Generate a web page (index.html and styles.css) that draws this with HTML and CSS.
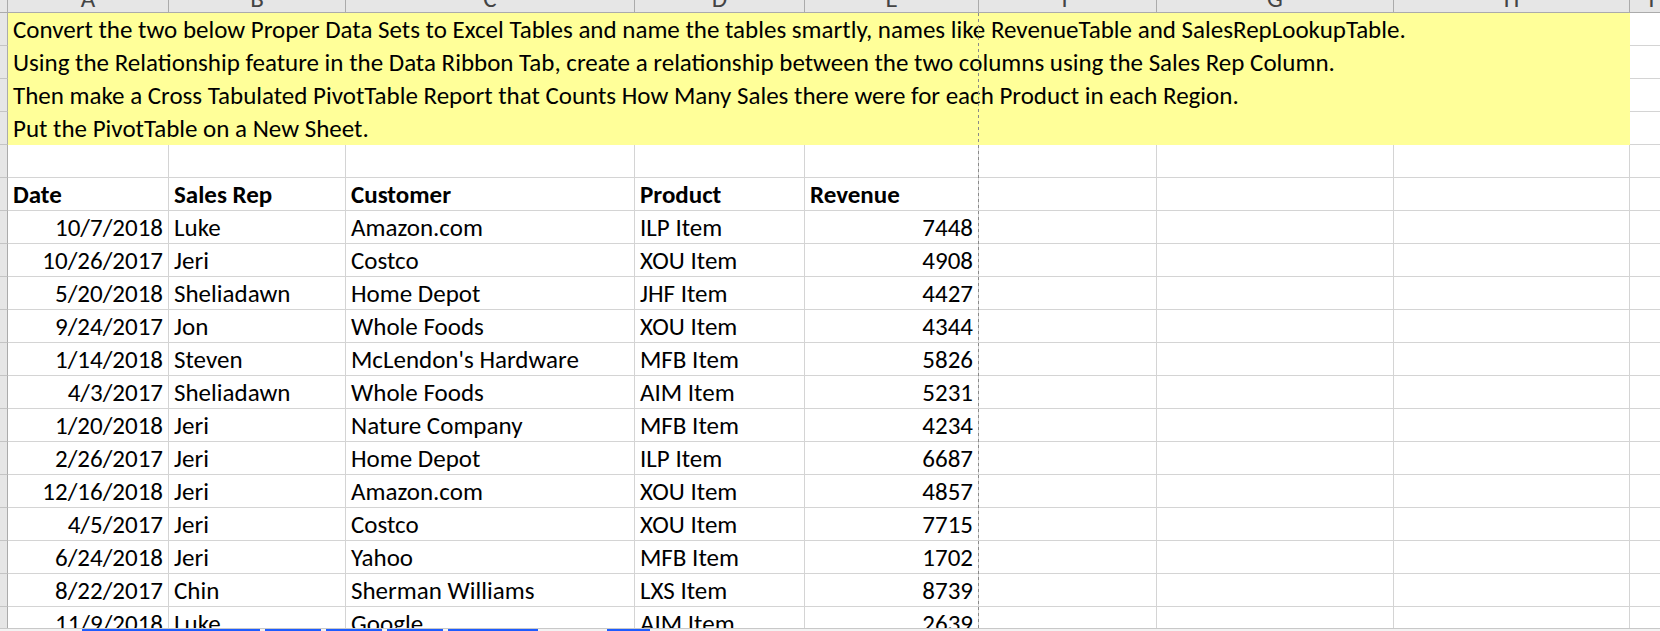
FILE: index.html
```html
<!DOCTYPE html>
<html>
<head>
<meta charset="utf-8">
<title>Sheet</title>
<link rel="stylesheet" href="styles.css">
</head>
<body>
<div class="window">
  <div class="sheet">
    <div class="corner"></div>
    <div class="ch"><span>A</span></div>
    <div class="ch"><span>B</span></div>
    <div class="ch"><span>C</span></div>
    <div class="ch"><span>D</span></div>
    <div class="ch"><span>E</span></div>
    <div class="ch"><span>F</span></div>
    <div class="ch"><span>G</span></div>
    <div class="ch"><span>H</span></div>
    <div class="ch"><span>I</span></div>

    <div class="rh"></div><div class="note">Convert the two below Proper Data Sets to Excel Tables and name the tables smartly, names like RevenueTable and SalesRepLookupTable.</div><div class="c"></div>
    <div class="rh"></div><div class="note">Using the Relationship feature in the Data Ribbon Tab, create a relationship between the two columns using the Sales Rep Column.</div><div class="c"></div>
    <div class="rh"></div><div class="note">Then make a Cross Tabulated PivotTable Report that Counts How Many Sales there were for each Product in each Region.</div><div class="c"></div>
    <div class="rh"></div><div class="note">Put the PivotTable on a New Sheet.</div><div class="c"></div>

    <div class="rh"></div><div class="c"></div><div class="c"></div><div class="c"></div><div class="c"></div><div class="c"></div><div class="c"></div><div class="c"></div><div class="c"></div><div class="c"></div>

    <div class="rh"></div><div class="c b">Date</div><div class="c b">Sales Rep</div><div class="c b">Customer</div><div class="c b">Product</div><div class="c b">Revenue</div><div class="c"></div><div class="c"></div><div class="c"></div><div class="c"></div>

    <div class="rh"></div><div class="c n">10/7/2018</div><div class="c">Luke</div><div class="c">Amazon.com</div><div class="c">ILP Item</div><div class="c n">7448</div><div class="c"></div><div class="c"></div><div class="c"></div><div class="c"></div>
    <div class="rh"></div><div class="c n">10/26/2017</div><div class="c">Jeri</div><div class="c">Costco</div><div class="c">XOU Item</div><div class="c n">4908</div><div class="c"></div><div class="c"></div><div class="c"></div><div class="c"></div>
    <div class="rh"></div><div class="c n">5/20/2018</div><div class="c">Sheliadawn</div><div class="c">Home Depot</div><div class="c">JHF Item</div><div class="c n">4427</div><div class="c"></div><div class="c"></div><div class="c"></div><div class="c"></div>
    <div class="rh"></div><div class="c n">9/24/2017</div><div class="c">Jon</div><div class="c">Whole Foods</div><div class="c">XOU Item</div><div class="c n">4344</div><div class="c"></div><div class="c"></div><div class="c"></div><div class="c"></div>
    <div class="rh"></div><div class="c n">1/14/2018</div><div class="c">Steven</div><div class="c">McLendon's Hardware</div><div class="c">MFB Item</div><div class="c n">5826</div><div class="c"></div><div class="c"></div><div class="c"></div><div class="c"></div>
    <div class="rh"></div><div class="c n">4/3/2017</div><div class="c">Sheliadawn</div><div class="c">Whole Foods</div><div class="c">AIM Item</div><div class="c n">5231</div><div class="c"></div><div class="c"></div><div class="c"></div><div class="c"></div>
    <div class="rh"></div><div class="c n">1/20/2018</div><div class="c">Jeri</div><div class="c">Nature Company</div><div class="c">MFB Item</div><div class="c n">4234</div><div class="c"></div><div class="c"></div><div class="c"></div><div class="c"></div>
    <div class="rh"></div><div class="c n">2/26/2017</div><div class="c">Jeri</div><div class="c">Home Depot</div><div class="c">ILP Item</div><div class="c n">6687</div><div class="c"></div><div class="c"></div><div class="c"></div><div class="c"></div>
    <div class="rh"></div><div class="c n">12/16/2018</div><div class="c">Jeri</div><div class="c">Amazon.com</div><div class="c">XOU Item</div><div class="c n">4857</div><div class="c"></div><div class="c"></div><div class="c"></div><div class="c"></div>
    <div class="rh"></div><div class="c n">4/5/2017</div><div class="c">Jeri</div><div class="c">Costco</div><div class="c">XOU Item</div><div class="c n">7715</div><div class="c"></div><div class="c"></div><div class="c"></div><div class="c"></div>
    <div class="rh"></div><div class="c n">6/24/2018</div><div class="c">Jeri</div><div class="c">Yahoo</div><div class="c">MFB Item</div><div class="c n">1702</div><div class="c"></div><div class="c"></div><div class="c"></div><div class="c"></div>
    <div class="rh"></div><div class="c n">8/22/2017</div><div class="c">Chin</div><div class="c">Sherman Williams</div><div class="c">LXS Item</div><div class="c n">8739</div><div class="c"></div><div class="c"></div><div class="c"></div><div class="c"></div>
    <div class="rh"></div><div class="c n">11/9/2018</div><div class="c">Luke</div><div class="c">Google</div><div class="c">AIM Item</div><div class="c n">2639</div><div class="c"></div><div class="c"></div><div class="c"></div><div class="c"></div>
  </div>
  <div class="page-break"></div>
  <div class="tabbar">
    <div class="tabgroup">
      <span class="tab t1"></span><span class="tab t2"></span><span class="tab t3"></span><span class="tab t4"></span><span class="tab t5"></span>
    </div>
    <div class="tabgroup second">
      <span class="tab t6"></span>
    </div>
  </div>
</div>
</body>
</html>
```

FILE: styles.css
```css
html, body {
  margin: 0;
  padding: 0;
  background: #ffffff;
}

.window {
  position: relative;
  width: 1660px;
  height: 631px;
  overflow: hidden;
  display: flex;
  flex-direction: column;
  font-family: Carlito, "Open Sans", Lato, "Liberation Sans", sans-serif;
  font-size: 25px;
  color: #000;
}

.sheet {
  flex: none;
  height: 628px;
  overflow: hidden;
  display: grid;
  grid-template-columns: 8px 161px 177px 289px 170px 174px 178px 237px 236px 44px;
  grid-template-rows: 13px;
  grid-auto-rows: 33px;
  width: 1674px;
}

.corner {
  background: #e6e6e6;
  border-right: 1px solid #ababab;
  border-bottom: 1px solid #ababab;
  box-sizing: border-box;
}

.ch {
  background: #e6e6e6;
  border-right: 1px solid #ababab;
  border-bottom: 1px solid #ababab;
  box-sizing: border-box;
  overflow: hidden;
  display: flex;
  justify-content: center;
  align-items: flex-start;
}

.ch span {
  display: block;
  line-height: 25px;
  margin-top: -14px;
  color: #444;
}

.rh {
  background: #e6e6e6;
  border-right: 1px solid #ababab;
  border-bottom: 1px solid #c4c4c4;
  box-sizing: border-box;
}

.c {
  box-sizing: border-box;
  border-right: 1px solid #d4d4d4;
  border-bottom: 1px solid #d4d4d4;
  padding: 0 5px 3px 5px;
  display: flex;
  align-items: flex-end;
  white-space: nowrap;
  line-height: 25px;
}

.c.n {
  justify-content: flex-end;
}

.c.b {
  font-weight: bold;
}

.note {
  grid-column: 2 / 10;
  background: #ffff99;
  padding: 0 5px 4px 5px;
  display: flex;
  align-items: flex-end;
  white-space: nowrap;
  line-height: 25px;
}

.page-break {
  position: absolute;
  left: 978px;
  top: 13px;
  width: 1px;
  height: 615px;
  background: repeating-linear-gradient(to bottom, #8a8a8a 0 3px, transparent 3px 6px);
}

.tabbar {
  flex: none;
  height: 3px;
  box-sizing: border-box;
  background: #f3f3f3;
  border-top: 1px solid #c8c8c8;
  display: flex;
  gap: 69px;
  padding-left: 82px;
}

.tabgroup {
  display: flex;
  gap: 5px;
}

.tab {
  display: block;
  height: 2px;
  background: #1e5cff;
}

.t1 { width: 178px; }
.t2 { width: 56px; }
.t3 { width: 56px; }
.t4 { width: 56px; }
.t5 { width: 90px; }
.t6 { width: 43px; }
```
